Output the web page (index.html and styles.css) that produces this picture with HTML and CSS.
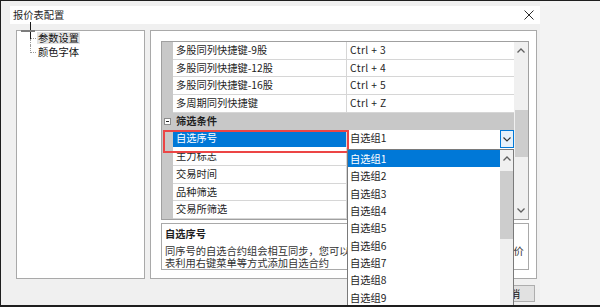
FILE: index.html
```html
<!DOCTYPE html>
<html lang="zh-CN">
<head>
  <meta charset="UTF-8" />
  <title>报价表配置</title>
  <link rel="stylesheet" href="styles.css">
</head>
<body>
  <div class="screen">
    <div class="dialog">
      <div class="titlebar">
        <span class="title">报价表配置</span>
        <svg class="close" width="10" height="10" viewBox="0 0 10 10">
          <path d="M0.5 0.5 L9.5 9.5 M9.5 0.5 L0.5 9.5" stroke="#2b2b2b" stroke-width="1" fill="none"/>
        </svg>
      </div>

      <div class="panels">
        <!-- 左侧树 -->
        <div class="tree-panel">
          <div class="tree-item">
            <span class="branch"><i class="up"></i><i class="down"></i></span>
            <span class="label selected">参数设置</span>
          </div>
          <div class="tree-item last">
            <span class="branch"><i class="up"></i><i class="down"></i></span>
            <span class="label">颜色字体</span>
          </div>
        </div>

        <!-- 右侧属性表 -->
        <div class="main-panel">
          <div class="grid">
            <div class="rows">
              <div class="row">
                <span class="gutter"></span>
                <span class="name">多股同列快捷键-9股</span>
                <span class="val">Ctrl + 3</span>
              </div>
              <div class="row">
                <span class="gutter"></span>
                <span class="name">多股同列快捷键-12股</span>
                <span class="val">Ctrl + 4</span>
              </div>
              <div class="row">
                <span class="gutter"></span>
                <span class="name">多股同列快捷键-16股</span>
                <span class="val">Ctrl + 5</span>
              </div>
              <div class="row">
                <span class="gutter"></span>
                <span class="name">多周期同列快捷键</span>
                <span class="val">Ctrl + Z</span>
              </div>
              <div class="row category">
                <span class="gutter"><i class="minus-box"></i></span>
                <span class="name">筛选条件</span>
              </div>
              <div class="row active">
                <span class="gutter"></span>
                <span class="name">自选序号</span>
                <span class="val combo">
                  <span class="combo-text">自选组1</span>
                  <span class="combo-btn">
                    <svg width="8" height="5" viewBox="0 0 8 5"><path d="M0.5 0.5 L4 4 L7.5 0.5" stroke="#333" stroke-width="1.2" fill="none"/></svg>
                  </span>
                </span>
              </div>
              <div class="row">
                <span class="gutter"></span>
                <span class="name">主力标志</span>
                <span class="val"></span>
              </div>
              <div class="row">
                <span class="gutter"></span>
                <span class="name">交易时间</span>
                <span class="val"></span>
              </div>
              <div class="row">
                <span class="gutter"></span>
                <span class="name">品种筛选</span>
                <span class="val"></span>
              </div>
              <div class="row">
                <span class="gutter"></span>
                <span class="name">交易所筛选</span>
                <span class="val"></span>
              </div>
            </div>
            <div class="vscroll">
              <span class="sb-btn">
                <svg width="8" height="5" viewBox="0 0 8 5"><path d="M0.5 4.5 L4 1 L7.5 4.5" stroke="#606060" stroke-width="1.3" fill="none"/></svg>
              </span>
              <span class="sb-track"><span class="sb-thumb"></span></span>
              <span class="sb-btn">
                <svg width="8" height="5" viewBox="0 0 8 5"><path d="M0.5 0.5 L4 4 L7.5 0.5" stroke="#606060" stroke-width="1.3" fill="none"/></svg>
              </span>
            </div>
          </div>

          <div class="desc">
            <div class="desc-title">自选序号</div>
            <div class="desc-text">
              同序号的自选合约组会相互同步，您可以在多个页面共享自选合约，也可在报价<br>
              表利用右键菜单等方式添加自选合约
            </div>
          </div>
        </div>
      </div>

      <div class="buttons">
        <button class="btn">确定</button>
        <button class="btn">取消</button>
      </div>

      <!-- 鼠标光标 -->
      <div class="cursor-line"></div>
      <div class="cursor-bar"></div>

      <!-- 红色标注框 -->
      <div class="highlight"></div>

      <!-- 下拉列表 -->
      <div class="dropdown">
        <div class="dd-items">
          <div class="dd-item selected">自选组1</div>
          <div class="dd-item">自选组2</div>
          <div class="dd-item">自选组3</div>
          <div class="dd-item">自选组4</div>
          <div class="dd-item">自选组5</div>
          <div class="dd-item">自选组6</div>
          <div class="dd-item">自选组7</div>
          <div class="dd-item">自选组8</div>
          <div class="dd-item">自选组9</div>
        </div>
        <div class="dd-scroll">
          <span class="dd-btn">
            <svg width="8" height="5" viewBox="0 0 8 5"><path d="M0.5 4.5 L4 1 L7.5 4.5" stroke="#606060" stroke-width="1.3" fill="none"/></svg>
          </span>
          <span class="dd-thumb"></span>
        </div>
      </div>
    </div>
  </div>
</body>
</html>
```

FILE: styles.css
```css
* {
    box-sizing: border-box;
}
body {
    margin: 0;
    width: 600px;
    height: 307px;
    overflow: hidden;
    background: #f3f3f3;
    font-family: "Noto Sans CJK SC", "Noto Sans", sans-serif;
    font-size: 10.25px;
    color: #1e1e1e;
}
.screen {
    height: 307px;
    border-top: 1px solid #1e1e1e;
    border-left: 1px solid #1e1e1e;
    border-bottom: 2px solid #1e1e1e;
}
.dialog {
    position: relative;
    width: 539px;
    height: 304px;
    background: #f0f0f0;
    overflow: hidden;
    padding-top: 5px;
    display: flex;
    flex-direction: column;
}
.titlebar {
    margin-left: 9px;
    height: 18px;
    background: #fff;
    display: flex;
    align-items: center;
    justify-content: space-between;
    padding: 0 6px 0 3px;
}
.title {
    line-height: 18px;
}
.close {
    display: block;
}
.panels {
    display: flex;
    gap: 5px;
    margin-top: 6px;
    padding-left: 15px;
    height: 249px;
}

/* 左侧树 */
.tree-panel {
    width: 129px;
    background: #fff;
    border: 1px solid #a9a9a9;
    padding-top: 0;
}
.tree-item {
    display: flex;
    height: 14px;
    align-items: center;
}
.branch {
    width: 20px;
    height: 14px;
    display: flex;
    flex-direction: column;
}
.branch i {
    flex: 1;
    margin-left: 13px;
    border-left: 1px dotted #9a9a9a;
}
.branch .up {
    width: 6px;
    border-bottom: 1px dotted #9a9a9a;
}
.tree-item.last .down {
    border-left: none;
}
.label {
    line-height: 12px;
    padding: 0 1px;
    color: #111;
}
.label.selected {
    background: #e2e2e2;
}

/* 右侧 */
.main-panel {
    width: 387px;
    background: #fff;
    border: 1px solid #a9a9a9;
    padding: 10px 7px 8px 10px;
    display: flex;
    flex-direction: column;
}
.grid {
    height: 179px;
    border: 1px solid #a0a0a0;
    display: flex;
}
.rows {
    width: 352px;
    display: flex;
    flex-direction: column;
}
.row {
    height: 17.7px;
    display: flex;
}
.gutter {
    width: 11px;
    background: #c8c8c8;
    display: flex;
    align-items: center;
    justify-content: center;
}
.name, .val {
    border-bottom: 1px solid #d6d6d6;
    line-height: 16.7px;
    white-space: nowrap;
    overflow: hidden;
}
.name {
    width: 174px;
    padding-left: 3px;
    border-right: 1px solid #d6d6d6;
}
.val {
    width: 167px;
    padding-left: 3px;
    letter-spacing: 0.4px;
}
.row.category .name {
    width: 341px;
    background: #c8c8c8;
    border: none;
    font-weight: bold;
}
.minus-box {
    width: 7px;
    height: 7px;
    border: 1px solid #8c8c8c;
    background: #fff;
    display: flex;
    align-items: center;
    justify-content: center;
}
.minus-box::after {
    content: "";
    width: 3px;
    height: 1px;
    background: #222;
}
.row.active .name {
    background: #0078d7;
    color: #fff;
    border-bottom-color: #fff;
}
.combo {
    display: flex;
    justify-content: space-between;
    padding-left: 3px;
    letter-spacing: 0;
    border-bottom: none;
}
.combo-btn {
    width: 14px;
    background: #e5f1fb;
    border: 1px solid #0078d7;
    display: flex;
    align-items: center;
    justify-content: center;
}
.vscroll {
    width: 14px;
    background: #f0f0f0;
    display: flex;
    flex-direction: column;
}
.sb-btn {
    height: 17px;
    display: flex;
    align-items: center;
    justify-content: center;
}
.sb-track {
    flex: 1;
    padding-top: 51px;
}
.sb-thumb {
    display: block;
    height: 47px;
    margin-left: 1px;
    background: #cdcdcd;
}
.desc {
    margin-top: 3px;
    height: 47px;
    border: 1px solid #a9a9a9;
    padding: 3px 4px 0 3px;
    overflow: hidden;
}
.desc-title {
    font-weight: bold;
    line-height: 14px;
}
.desc-text {
    margin-top: 4px;
    line-height: 12px;
    white-space: nowrap;
    color: #333;
}

/* 底部按钮 */
.buttons {
    display: flex;
    justify-content: flex-end;
    gap: 6px;
    margin-top: 6px;
    padding-right: 5px;
}
.btn {
    width: 50px;
    height: 17px;
    padding: 0;
    font: inherit;
    color: #111;
    background: #e1e1e1;
    border: 1px solid #adadad;
}

/* 光标 */
.cursor-line {
    position: absolute;
    left: 29px;
    top: 21px;
    width: 1px;
    height: 17px;
    background: #1a1a1a;
}
.cursor-bar {
    position: absolute;
    left: 20px;
    top: 29px;
    width: 14px;
    height: 2px;
    background: #7c7c7c;
}

.highlight {
    position: absolute;
    left: 162px;
    top: 129px;
    width: 186px;
    height: 23px;
    border: 2px solid #ec4545;
}

/* 下拉列表 */
.dropdown {
    position: absolute;
    left: 346px;
    top: 148px;
    width: 167px;
    height: 170px;
    background: #fff;
    border: 1px solid #7a7a7a;
    display: flex;
}
.dd-items {
    width: 152px;
}
.dd-item {
    height: 17.35px;
    line-height: 17.35px;
    padding-left: 2px;
}
.dd-item.selected {
    background: #0078d7;
    color: #fff;
}
.dd-scroll {
    width: 13px;
    background: #f0f0f0;
    display: flex;
    flex-direction: column;
}
.dd-btn {
    height: 17px;
    display: flex;
    align-items: center;
    justify-content: center;
}
.dd-thumb {
    display: block;
    margin-top: 4px;
    height: 68px;
    background: #cdcdcd;
}
```
